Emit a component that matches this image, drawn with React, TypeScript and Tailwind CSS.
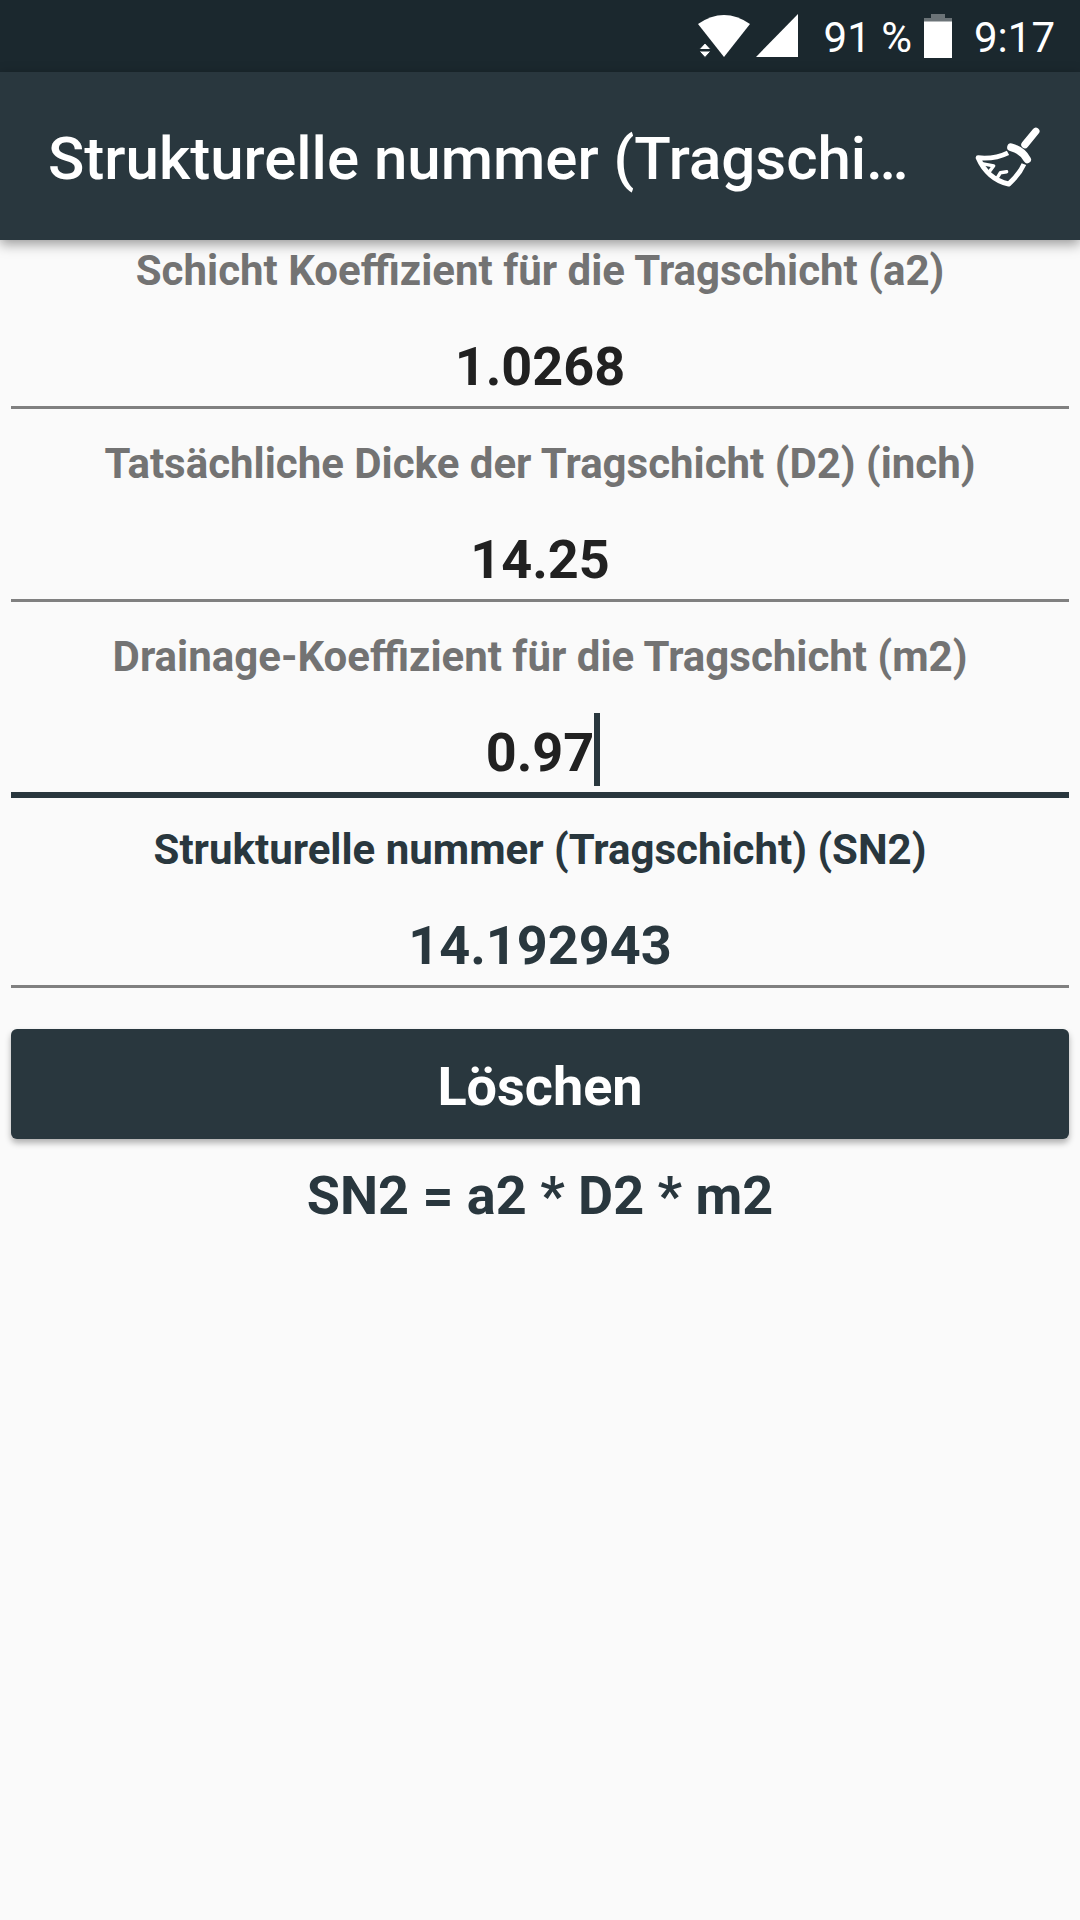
import React, { useState } from 'react';

type FieldId = 'a2' | 'd2' | 'm2';

interface FieldProps {
  id: string;
  label: string;
  value: string;
  active?: boolean;
  result?: boolean;
  onChange?: (value: string) => void;
  onFocus?: () => void;
}

const INPUTS: { id: FieldId; label: string }[] = [
  { id: 'a2', label: 'Schicht Koeffizient für die Tragschicht (a2)' },
  { id: 'd2', label: 'Tatsächliche Dicke der Tragschicht (D2) (inch)' },
  { id: 'm2', label: 'Drainage-Koeffizient für die Tragschicht (m2)' },
];

const EMPTY: Record<FieldId, string> = { a2: '', d2: '', m2: '' };

const StatusBar: React.FC = () => (
  <div className="flex h-[72px] items-center justify-end bg-[#1b282e] pr-[25px] text-[42px] leading-[72px] text-white">
    <svg width="54" height="44" viewBox="0 0 54 44" fill="currentColor" aria-hidden="true">
      <path d="M0 10Q26-8 52 10L26 43Z" />
      <path d="M7 29L13 35.500H1ZM7 43.500L13 37H1Z" stroke="#1b282e" strokeWidth="1" />
    </svg>
    <svg className="ml-1" width="42" height="44" viewBox="0 0 42 44" fill="currentColor" aria-hidden="true">
      <path d="M42 0V43H0Z" />
    </svg>
    <span className="ml-[26px] pt-1">91 %</span>
    <svg className="ml-3" width="28" height="44" viewBox="0 0 28 44" aria-hidden="true">
      <path d="M7 0H21V4H28V8H0V4H7Z" fill="#6b7377" />
      <path d="M0 7.500H28V44H0Z" fill="#fff" />
    </svg>
    <span className="ml-[22px] pt-1">9:17</span>
  </div>
);

const BroomIcon: React.FC = () => (
  <svg width="70" height="63" viewBox="40 40 210 190" fill="none" stroke="currentColor" aria-hidden="true">
    <path d="M229 59L196 99" strokeWidth="22" strokeLinecap="round" />
    <path d="M154 107C174 112 193 126 203 144" strokeWidth="23" strokeLinecap="round" />
    <path d="M145 124C119 137 88 142 55 139C72 179 105 209 147 218C165 202 183 181 193 158" strokeWidth="15" strokeLinejoin="round" />
    <path d="M70 157L102 163L88 182M112 200L122 184L141 181" strokeWidth="10" strokeLinejoin="round" strokeLinecap="round" />
  </svg>
);

const Field: React.FC<FieldProps> = ({ id, label, value, active, result, onChange, onFocus }) => (
  <div className={active ? 'pb-[21px]' : 'pb-6'}>
    <label
      htmlFor={id}
      className={`block h-[60px] text-center text-[42px] leading-[62px] font-bold ${result ? 'text-[#29373e]' : 'text-[#737373]'}`}
    >
      {label}
    </label>
    <div className="relative">
      <input
        id={id}
        type="text"
        inputMode="decimal"
        value={value}
        readOnly={result}
        onChange={(e) => onChange?.(e.target.value)}
        onFocus={onFocus}
        className={`block w-full bg-transparent pt-[26px] text-center text-[54px] font-bold caret-transparent outline-none ${
          active ? 'h-[112px] border-b-[6px] border-[#29373e]' : 'h-[109px] border-b-[3px] border-[#808080]'
        } ${result ? 'text-[#29373e]' : 'text-[#212121]'}`}
      />
      {/* Text cursor */}
      {active && value && (
        <span className="absolute top-[27px] left-[calc(50%+54px)] h-[73px] w-[6px] bg-[#29373e]"></span>
      )}
    </div>
  </div>
);

const App: React.FC = () => {
  const [values, setValues] = useState<Record<FieldId, string>>({ a2: '1.0268', d2: '14.25', m2: '0.97' });
  const [active, setActive] = useState<FieldId>('m2');

  const product = parseFloat(values.a2) * parseFloat(values.d2) * parseFloat(values.m2);
  const result = Number.isNaN(product) ? '' : String(Number(product.toFixed(6)));

  const handleClear = () => setValues(EMPTY);

  return (
    <div className="min-h-screen bg-[#fafafa] font-[Roboto,sans-serif]">
      <StatusBar />

      <header className="relative flex h-[168px] items-center bg-[#29373e] pl-12 text-white shadow-[0_4px_12px_rgba(0,0,0,0.4)]">
        <h1 className="min-w-0 flex-1 truncate pt-[6px] text-[60px] leading-[80px] font-medium">
          Strukturelle nummer (Tragschi…
        </h1>
        <button
          type="button"
          onClick={handleClear}
          aria-label="Löschen"
          className="flex h-full w-36 items-center justify-center"
        >
          <BroomIcon />
        </button>
      </header>

      <main className="px-[11px]">
        {INPUTS.map((field) => (
          <Field
            key={field.id}
            id={field.id}
            label={field.label}
            value={values[field.id]}
            active={active === field.id}
            onChange={(val) => setValues({ ...values, [field.id]: val })}
            onFocus={() => setActive(field.id)}
          />
        ))}
        <Field id="sn2" label="Strukturelle nummer (Tragschicht) (SN2)" value={result} result />

        <button
          type="button"
          onClick={handleClear}
          className="mt-[17px] block h-[110px] w-full rounded-md bg-[#29373e] pt-1 text-center text-[54px] font-bold text-white shadow-[0_4px_6px_rgba(0,0,0,0.3)]"
        >
          Löschen
        </button>

        <p className="mt-[25px] text-center text-[54px] leading-[64px] font-bold text-[#29373e]">SN2 = a2 * D2 * m2</p>
      </main>
    </div>
  );
};

export default App;
